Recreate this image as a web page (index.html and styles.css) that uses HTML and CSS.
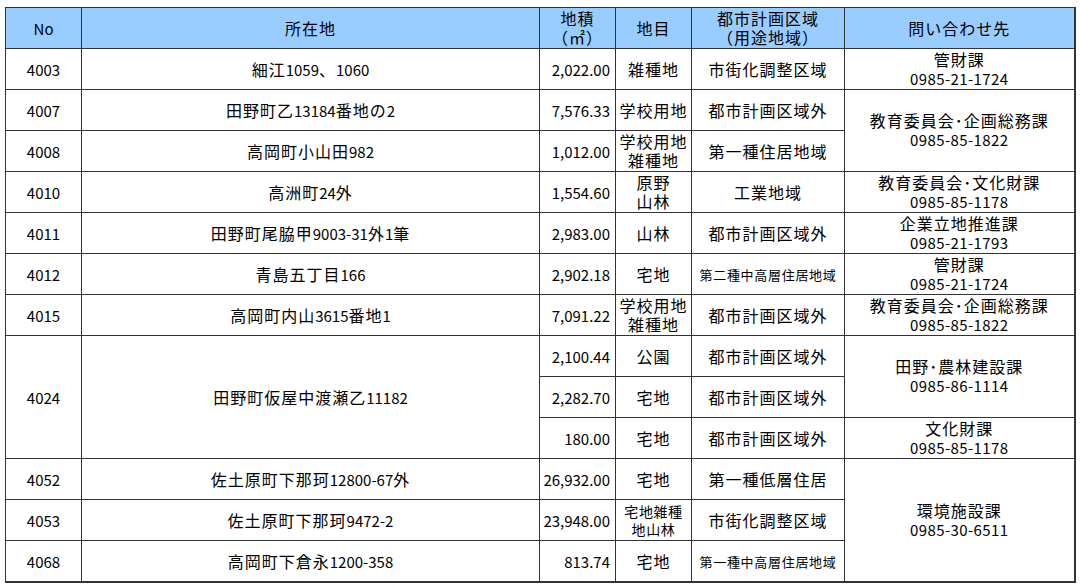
FILE: index.html
```html
<!DOCTYPE html>
<html lang="ja">
<head>
<meta charset="utf-8">
<link rel="stylesheet" href="styles.css">
</head>
<body>
<table class="list">
  <colgroup>
    <col class="c-no"><col class="c-loc"><col class="c-area"><col class="c-cat"><col class="c-zone"><col class="c-contact">
  </colgroup>
  <thead>
    <tr>
      <th class="no">No</th>
      <th>所在地</th>
      <th>地積<br>（㎡）</th>
      <th>地目</th>
      <th>都市計画区域<br>（用途地域）</th>
      <th>問い合わせ先</th>
    </tr>
  </thead>
  <tbody>
    <tr>
      <td class="no">4003</td><td>細江<span class="n">1059</span>、<span class="n">1060</span></td><td class="num">2,022.00</td><td>雑種地</td><td>市街化調整区域</td><td>管財課<span class="tel">0985-21-1724</span></td>
    </tr>
    <tr>
      <td class="no">4007</td><td>田野町乙<span class="n">13184</span>番地の<span class="n">2</span></td><td class="num">7,576.33</td><td>学校用地</td><td>都市計画区域外</td><td rowspan="2">教育委員会･企画総務課<span class="tel">0985-85-1822</span></td>
    </tr>
    <tr>
      <td class="no">4008</td><td>高岡町小山田<span class="n">982</span></td><td class="num">1,012.00</td><td>学校用地<br>雑種地</td><td>第一種住居地域</td>
    </tr>
    <tr>
      <td class="no">4010</td><td>高洲町<span class="n">24</span>外</td><td class="num">1,554.60</td><td>原野<br>山林</td><td>工業地域</td><td>教育委員会･文化財課<span class="tel">0985-85-1178</span></td>
    </tr>
    <tr>
      <td class="no">4011</td><td>田野町尾脇甲<span class="n">9003-31</span>外<span class="n">1</span>筆</td><td class="num">2,983.00</td><td>山林</td><td>都市計画区域外</td><td>企業立地推進課<span class="tel">0985-21-1793</span></td>
    </tr>
    <tr>
      <td class="no">4012</td><td>青島五丁目<span class="n">166</span></td><td class="num">2,902.18</td><td>宅地</td><td class="small">第二種中高層住居地域</td><td>管財課<span class="tel">0985-21-1724</span></td>
    </tr>
    <tr>
      <td class="no">4015</td><td>高岡町内山<span class="n">3615</span>番地<span class="n">1</span></td><td class="num">7,091.22</td><td>学校用地<br>雑種地</td><td>都市計画区域外</td><td>教育委員会･企画総務課<span class="tel">0985-85-1822</span></td>
    </tr>
    <tr>
      <td class="no" rowspan="3">4024</td><td rowspan="3">田野町仮屋中渡瀬乙<span class="n">11182</span></td><td class="num">2,100.44</td><td>公園</td><td>都市計画区域外</td><td rowspan="2">田野･農林建設課<span class="tel">0985-86-1114</span></td>
    </tr>
    <tr>
      <td class="num">2,282.70</td><td>宅地</td><td>都市計画区域外</td>
    </tr>
    <tr>
      <td class="num">180.00</td><td>宅地</td><td>都市計画区域外</td><td>文化財課<span class="tel">0985-85-1178</span></td>
    </tr>
    <tr>
      <td class="no">4052</td><td>佐土原町下那珂<span class="n">12800-67</span>外</td><td class="num">26,932.00</td><td>宅地</td><td>第一種低層住居</td><td rowspan="3">環境施設課<span class="tel">0985-30-6511</span></td>
    </tr>
    <tr>
      <td class="no">4053</td><td>佐土原町下那珂<span class="n">9472-2</span></td><td class="num">23,948.00</td><td class="mid">宅地雑種<br>地山林</td><td>市街化調整区域</td>
    </tr>
    <tr>
      <td class="no">4068</td><td>高岡町下倉永<span class="n">1200-358</span></td><td class="num">813.74</td><td>宅地</td><td class="small">第一種中高層住居地域</td>
    </tr>
  </tbody>
</table>
</body>
</html>
```

FILE: styles.css
```css
html, body {
  margin: 0;
  padding: 0;
  background: #ffffff;
}
body {
  padding: 7px 0 0 5px;
  font-family: "Noto Sans CJK JP", "Noto Sans", sans-serif;
  font-size: 16px;
  color: #000;
}
.list {
  border-collapse: collapse;
  table-layout: fixed;
  width: 1069px;
  border-right: 2px solid #333;
  border-bottom: 2px solid #333;
}
.c-no { width: 76px; }
.c-loc { width: 458px; }
.c-area { width: 76px; }
.c-cat { width: 76px; }
.c-zone { width: 153px; }
.c-contact { width: 230px; }
.list th, .list td {
  border: 1px solid #333;
  height: 40px;
  padding: 0;
  text-align: center;
  vertical-align: middle;
  line-height: 19px;
  font-weight: normal;
  letter-spacing: 1px;
  white-space: nowrap;
}
.list th {
  background: #99ccff;
}
.list .no,
.list td.num {
  font-size: 15px;
  letter-spacing: 0;
}
.list td.num {
  text-align: right;
  padding-right: 5px;
}
.n {
  font-size: 15px;
  letter-spacing: 0;
}
.tel {
  display: block;
  font-size: 15px;
  line-height: 20px;
  letter-spacing: 0.4px;
}
.list td.small {
  font-size: 13px;
  letter-spacing: 0.7px;
}
.list td.mid {
  font-size: 14px;
  letter-spacing: 0.6px;
  line-height: 18px;
}
```
